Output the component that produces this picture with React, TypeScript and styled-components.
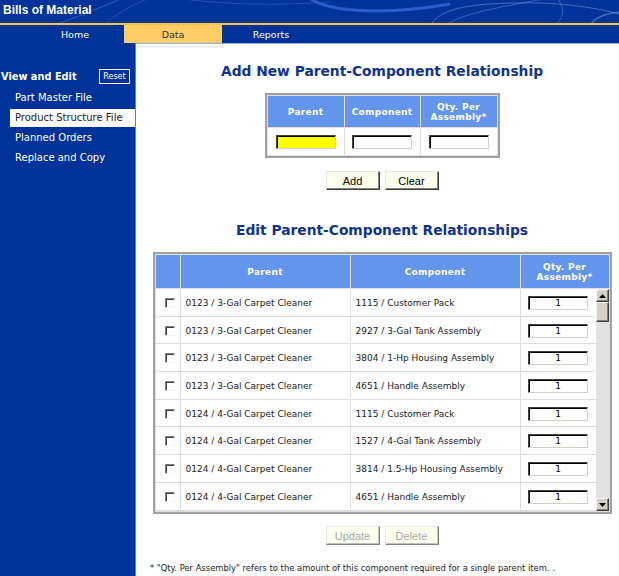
import React from "react";
import styled, { createGlobalStyle } from "styled-components";

const GlobalStyle = createGlobalStyle`
  html, body { margin: 0; padding: 0; background: #ffffff; }
  body { font-family: "DejaVu Sans", Verdana, sans-serif; }
  #root { min-height: 100vh; }
  * { box-sizing: border-box; }
`;

const BLUE = "#003399";
const HEAD_BLUE = "#6495ed";
const LINE = "#dcdcdc";

const Page = styled.div`
  width: 619px;
  min-height: 576px;
  display: flex;
  flex-direction: column;
`;

const Banner = styled.header`
  position: relative;
  height: 23px;
  background: ${BLUE};
  overflow: hidden;
`;

const Swirl = styled.svg`
  position: absolute;
  left: 0;
  top: 0;
  width: 619px;
  height: 23px;
`;

const Title = styled.h1`
  position: relative;
  margin: 0;
  padding-left: 3px;
  font: bold 12px/21px "Liberation Sans", Arial, sans-serif;
  color: #ffffff;
`;

const GoldLine = styled.div`
  height: 2px;
  background: #f2c445;
`;

const NavBar = styled.nav`
  height: 18px;
  background: ${BLUE};
  display: flex;
  padding-left: 26px;
`;

const Tab = styled.div<{ $active?: boolean }>`
  width: 98px;
  text-align: center;
  font: 9.5px/19px "DejaVu Sans", Verdana, sans-serif;
  color: ${(p) => (p.$active ? "#333333" : "#ffffff")};
  background: ${(p) => (p.$active ? "#ffcc66" : "transparent")};
`;

const Body = styled.div`
  flex: 1;
  display: flex;
`;

const Sidebar = styled.aside`
  width: 136px;
  flex: none;
  background: ${BLUE};
  border-right: 1px solid #5a7fd8;
  padding-top: 25px;
`;

const SectionRow = styled.div`
  height: 16px;
  display: flex;
  align-items: center;
  justify-content: space-between;
  padding: 0 5px 0 1px;
`;

const SectionTitle = styled.span`
  font: bold 9.8px "DejaVu Sans", Verdana, sans-serif;
  color: #ffffff;
`;

const ResetButton = styled.button`
  width: 31px;
  height: 15px;
  padding: 0;
  border: 1px solid #ffffff;
  background: transparent;
  color: #ffffff;
  font: 8px "DejaVu Sans", Verdana, sans-serif;
`;

const Menu = styled.ul`
  list-style: none;
  margin: 5px 0 0;
  padding: 0;
  display: flex;
  flex-direction: column;
  gap: 2px;
`;

const MenuItem = styled.li<{ $active?: boolean }>`
  margin-left: 10px;
  padding-left: 5px;
  height: 18px;
  font: 10px/18px "DejaVu Sans", Verdana, sans-serif;
  color: ${(p) => (p.$active ? "#222222" : "#ffffff")};
  background: ${(p) => (p.$active ? "#ffffff" : "transparent")};
`;

const Main = styled.main`
  flex: 1;
  border-top: 1px solid #8fb0f0;
  padding-left: 9px;
  display: flex;
  flex-direction: column;
  align-items: center;
`;

const Heading = styled.h2<{ $top: number }>`
  margin: ${(p) => p.$top}px 0 0;
  font: bold 13.8px/18px "DejaVu Sans", Verdana, sans-serif;
  color: #0f3390;
`;

const AddGrid = styled.div`
  margin-top: 13px;
  display: grid;
  grid-template-columns: 76px 75px 76px;
  grid-template-rows: 31px 27px;
  gap: 1px;
  padding: 1px;
  background: #dedede;
  border: 2px solid #a0a0a0;
`;

const HeadCell = styled.div`
  background: ${HEAD_BLUE};
  color: #ffffff;
  font: bold 9px/10px "DejaVu Sans", Verdana, sans-serif;
  letter-spacing: 0.3px;
  display: flex;
  align-items: center;
  justify-content: center;
  text-align: center;
  padding-top: 1px;
`;

const InputCell = styled.div`
  background: #ffffff;
  display: flex;
  align-items: center;
  justify-content: center;
`;

const TextBox = styled.input<{ $highlight?: boolean }>`
  width: 60px;
  height: 14px;
  padding: 0 2px;
  border: 1px solid;
  border-color: #404040 #d4d0c8 #d4d0c8 #404040;
  box-shadow: inset 1px 1px 0 #000000;
  background: ${(p) => (p.$highlight ? "#ffff00" : "#ffffff")};
  font: 9px "DejaVu Sans", Verdana, sans-serif;
  color: #000000;
  text-align: center;
  outline: none;
`;

const ButtonRow = styled.div<{ $top: number }>`
  margin-top: ${(p) => p.$top}px;
  display: flex;
  gap: 5px;
`;

const Button = styled.button`
  width: 54px;
  height: 19px;
  padding: 0;
  background: #ffffee;
  border: 1px solid;
  border-color: #e4e4e4 #404040 #404040 #e4e4e4;
  box-shadow: inset -1px -1px 0 #808080;
  font: 11px "Liberation Sans", Arial, sans-serif;
  color: #000000;
  &:disabled {
    color: #a8a8a8;
    border-color: #e8e8e8 #808080 #808080 #e8e8e8;
    box-shadow: inset -1px -1px 0 #c0c0c0;
  }
`;

const EditTable = styled.div`
  margin-top: 13px;
  width: 459px;
  border: 2px solid #a0a0a0;
  padding: 1px;
  background: #dedede;
  display: flex;
  flex-direction: column;
  gap: 1px;
`;

const EditHead = styled.div`
  display: grid;
  grid-template-columns: 24px 169px 169px 1fr;
  column-gap: 1px;
  height: 33px;
`;

const EditBody = styled.div`
  display: flex;
  height: 222px;
  background: #ffffff;
`;

const Rows = styled.div`
  flex: 1;
  overflow: hidden;
`;

const Row = styled.div`
  display: grid;
  grid-template-columns: 24px 169px 169px 1fr;
  column-gap: 1px;
  height: 27.7px;
  background: ${LINE};
  border-bottom: 1px solid ${LINE};
`;

const Cell = styled.div<{ $center?: boolean }>`
  background: #ffffff;
  display: flex;
  align-items: center;
  justify-content: ${(p) => (p.$center ? "center" : "flex-start")};
  padding-left: ${(p) => (p.$center ? 0 : 5)}px;
  padding-top: 1px;
  font: 9px "DejaVu Sans", Verdana, sans-serif;
  color: #222222;
  white-space: nowrap;
`;

const CheckBox = styled.input`
  appearance: none;
  margin: 0 0 0 4px;
  width: 10px;
  height: 10px;
  border: 1px solid;
  border-color: #808080 #f4f4f4 #f4f4f4 #808080;
  box-shadow: inset 1px 1px 0 #404040;
  background: #ffffff;
`;

const ScrollBar = styled.div`
  width: 13px;
  flex: none;
  display: flex;
  flex-direction: column;
  background: #e2e2e2;
`;

const ScrollPart = styled.div<{ $h: number }>`
  height: ${(p) => p.$h}px;
  flex: none;
  background: #d4d0c8;
  border: 1px solid;
  border-color: #f4f4f4 #404040 #404040 #f4f4f4;
  box-shadow: inset -1px -1px 0 #808080;
  display: flex;
  align-items: center;
  justify-content: center;
`;

const Track = styled.div`
  flex: 1;
`;

const Footnote = styled.p`
  align-self: flex-start;
  margin: 18px 0 0 5px;
  font: 8.4px/10px "DejaVu Sans", Verdana, sans-serif;
  color: #222222;
  white-space: nowrap;
`;

const Arrow = ({ up }: { up?: boolean }) => (
  <svg width="7" height="4" viewBox="0 0 7 4">
    <path d={up ? "M0 4 L3.5 0 L7 4 Z" : "M0 0 L3.5 4 L7 0 Z"} fill="#000000" />
  </svg>
);

const rows: [string, string][] = [
  ["0123 / 3-Gal Carpet Cleaner", "1115 / Customer Pack"],
  ["0123 / 3-Gal Carpet Cleaner", "2927 / 3-Gal Tank Assembly"],
  ["0123 / 3-Gal Carpet Cleaner", "3804 / 1-Hp Housing Assembly"],
  ["0123 / 3-Gal Carpet Cleaner", "4651 / Handle Assembly"],
  ["0124 / 4-Gal Carpet Cleaner", "1115 / Customer Pack"],
  ["0124 / 4-Gal Carpet Cleaner", "1527 / 4-Gal Tank Assembly"],
  ["0124 / 4-Gal Carpet Cleaner", "3814 / 1.5-Hp Housing Assembly"],
  ["0124 / 4-Gal Carpet Cleaner", "4651 / Handle Assembly"],
];

export default function App() {
  return (
    <Page>
      <GlobalStyle />
      <Banner>
        <Swirl viewBox="0 0 619 23" preserveAspectRatio="none">
          <path d="M128 -4 C 100 8, 70 20, 40 30" stroke="#3d6cd0" strokeWidth="1" fill="none" opacity="0.7" />
          <path d="M150 -2 C 125 8, 110 18, 100 30" stroke="#3d6cd0" strokeWidth="1" fill="none" opacity="0.5" />
          <path d="M190 0 C 230 4, 270 6, 330 2" stroke="#3d6cd0" strokeWidth="1" fill="none" opacity="0.5" />
          <path d="M305 -6 C 320 12, 380 16, 450 4" stroke="#2d63d4" strokeWidth="3" fill="none" opacity="0.9" />
          <path d="M430 26 C 440 8, 470 2, 540 3 C 575 4, 605 10, 619 14" stroke="#6f8fd8" strokeWidth="1" fill="none" opacity="0.6" />
          <path d="M445 26 C 460 12, 520 4, 560 -4" stroke="#6f8fd8" strokeWidth="1" fill="none" opacity="0.5" />
          <path d="M555 -4 C 565 6, 565 16, 555 26" stroke="#6f8fd8" strokeWidth="1" fill="none" opacity="0.5" />
          <path d="M590 26 C 595 16, 610 12, 625 12" stroke="#6f8fd8" strokeWidth="1.5" fill="none" opacity="0.6" />
        </Swirl>
        <Title>Bills of Material</Title>
      </Banner>
      <GoldLine />
      <NavBar>
        <Tab>Home</Tab>
        <Tab $active>Data</Tab>
        <Tab>Reports</Tab>
      </NavBar>
      <Body>
        <Sidebar>
          <SectionRow>
            <SectionTitle>View and Edit</SectionTitle>
            <ResetButton>Reset</ResetButton>
          </SectionRow>
          <Menu>
            <MenuItem>Part Master File</MenuItem>
            <MenuItem $active>Product Structure File</MenuItem>
            <MenuItem>Planned Orders</MenuItem>
            <MenuItem>Replace and Copy</MenuItem>
          </Menu>
        </Sidebar>
        <Main>
          <Heading $top={18}>Add New Parent-Component Relationship</Heading>
          <AddGrid>
            <HeadCell>Parent</HeadCell>
            <HeadCell>Component</HeadCell>
            <HeadCell>
              Qty. Per
              <br />
              Assembly*
            </HeadCell>
            <InputCell>
              <TextBox $highlight />
            </InputCell>
            <InputCell>
              <TextBox />
            </InputCell>
            <InputCell>
              <TextBox />
            </InputCell>
          </AddGrid>
          <ButtonRow $top={13}>
            <Button>Add</Button>
            <Button>Clear</Button>
          </ButtonRow>
          <Heading $top={31}>Edit Parent-Component Relationships</Heading>
          <EditTable>
            <EditHead>
              <HeadCell />
              <HeadCell>Parent</HeadCell>
              <HeadCell>Component</HeadCell>
              <HeadCell>
                Qty. Per
                <br />
                Assembly*
              </HeadCell>
            </EditHead>
            <EditBody>
              <Rows>
                {rows.map(([parent, comp], i) => (
                  <Row key={i}>
                    <Cell $center>
                      <CheckBox type="checkbox" />
                    </Cell>
                    <Cell>{parent}</Cell>
                    <Cell>{comp}</Cell>
                    <Cell $center>
                      <TextBox defaultValue="1" />
                    </Cell>
                  </Row>
                ))}
              </Rows>
              <ScrollBar>
                <ScrollPart $h={13}>
                  <Arrow up />
                </ScrollPart>
                <ScrollPart $h={20} />
                <Track />
                <ScrollPart $h={13}>
                  <Arrow />
                </ScrollPart>
              </ScrollBar>
            </EditBody>
          </EditTable>
          <ButtonRow $top={12}>
            <Button disabled>Update</Button>
            <Button disabled>Delete</Button>
          </ButtonRow>
          <Footnote>
            * "Qty. Per Assembly" refers to the amount of this component required for a single parent item. .
          </Footnote>
        </Main>
      </Body>
    </Page>
  );
}
